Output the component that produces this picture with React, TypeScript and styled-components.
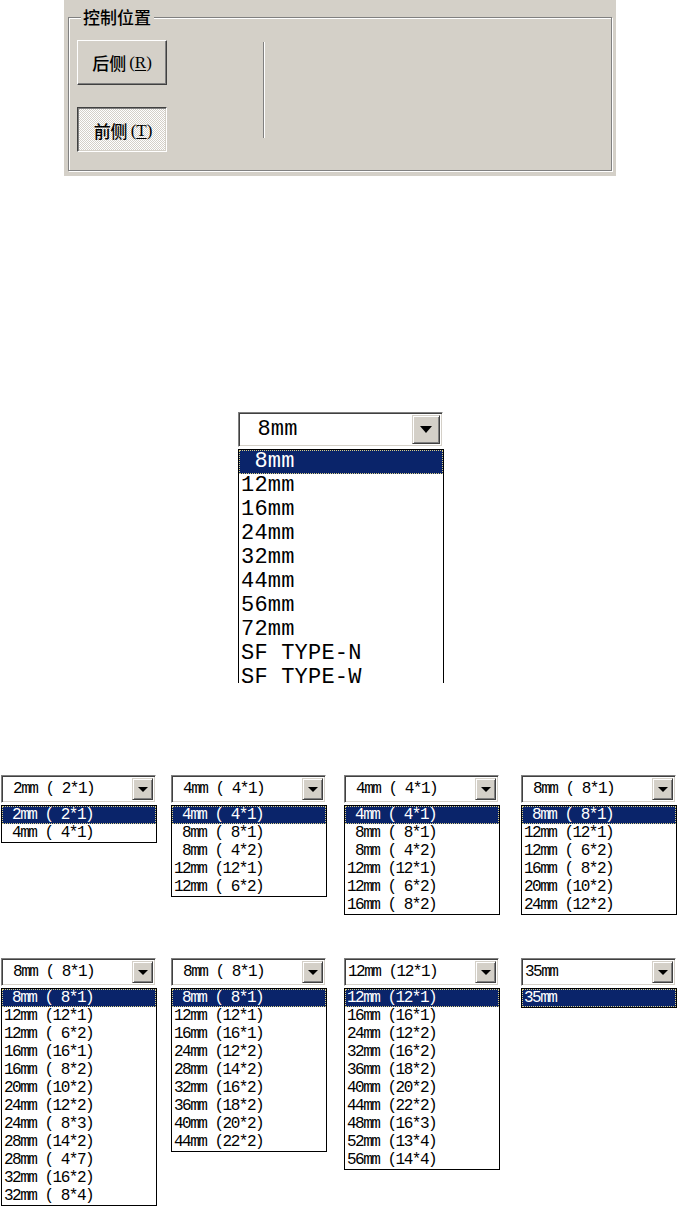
import React from 'react';
import styled, { createGlobalStyle, css } from 'styled-components';

const FACE = '#d4d0c8';
const SHADOW = '#808080';
const DARK = '#404040';
const NAVY = '#0a246a';

const GlobalStyle = createGlobalStyle`
    html, body {
        margin: 0;
        padding: 0;
        background: #fff;
    }
    body {
        font-family: "Liberation Sans", Arial, sans-serif;
    }
`;

const Page = styled.div`
    width: 680px;
    height: 1211px;
    overflow: hidden;
    display: flex;
    flex-direction: column;
`;

/* ---------- dialog panel ---------- */

const Panel = styled.div`
    margin-left: 64px;
    width: 552px;
    height: 176px;
    box-sizing: border-box;
    padding: 7px 4px 0 4px;
    background: ${FACE};
`;

const GroupBox = styled.fieldset`
    margin: 0;
    height: 164px;
    box-sizing: border-box;
    padding: 13px 8px 0 8px;
    border: 1px solid ${SHADOW};
    box-shadow: inset 1px 1px 0 #fff, 1px 1px 0 #fff;
    display: flex;
    align-items: flex-start;
`;

const Legend = styled.legend`
    margin-left: 4px;
    padding: 0 3px 0 2px;
    background: ${FACE};
    font-family: "Noto Sans CJK SC", sans-serif;
    font-size: 17px;
    font-weight: 500;
    line-height: 20px;
    color: #000;
`;

const ButtonColumn = styled.div`
    display: flex;
    flex-direction: column;
    gap: 22px;
`;

const PushButton = styled.div<{ $pressed?: boolean }>`
    width: 90px;
    height: 45px;
    box-sizing: border-box;
    display: flex;
    align-items: center;
    justify-content: center;
    font-family: "Noto Sans CJK SC", sans-serif;
    font-size: 17px;
    font-weight: 500;
    color: #000;
    border: 1px solid;
    ${(p) =>
        p.$pressed
            ? css`
                  border-color: ${DARK} #fff #fff ${DARK};
                  box-shadow: inset 1px 1px 0 ${SHADOW}, inset -1px -1px 0 ${FACE};
                  background-color: ${FACE};
                  background-image: repeating-conic-gradient(#fff 0 25%, ${FACE} 0 50%);
                  background-size: 2px 2px;
                  padding: 2px 0 0 2px;
              `
            : css`
                  border-color: #fff ${DARK} ${DARK} #fff;
                  box-shadow: inset -1px -1px 0 ${SHADOW};
                  background: ${FACE};
              `}
`;

const Mnemonic = styled.span`
    font-family: "Liberation Serif", serif;
    font-size: 17px;
    margin-left: 3px;

    u {
        text-underline-offset: 2px;
    }
`;

const Separator = styled.div`
    margin: 2px 0 0 96px;
    width: 1px;
    height: 96px;
    background: ${SHADOW};
    box-shadow: 1px 0 0 #fff;
`;

/* ---------- combo boxes ---------- */

type Size = 'big' | 'small';

const fontFor = (s: Size) =>
    s === 'big'
        ? css`
              font-size: 22px;
              letter-spacing: 0.2px;
          `
        : css`
              font-size: 16px;
              letter-spacing: -1.5px;
          `;

const ComboStack = styled.div<{ $left?: number }>`
    display: flex;
    flex-direction: column;
    align-items: flex-start;
    margin-left: ${(p) => p.$left ?? 0}px;
`;

const ComboField = styled.div<{ $w: number; $h: number }>`
    width: ${(p) => p.$w}px;
    height: ${(p) => p.$h}px;
    box-sizing: border-box;
    padding: 2px;
    display: flex;
    align-items: stretch;
    background: #fff;
    border: 1px solid;
    border-color: ${SHADOW} #fff #fff ${SHADOW};
    box-shadow: inset 1px 1px 0 ${DARK}, inset -1px -1px 0 ${FACE};
`;

const ComboText = styled.div<{ $size: Size }>`
    flex: 1;
    display: flex;
    align-items: center;
    padding-left: ${(p) => (p.$size === 'big' ? 3 : 1)}px;
    white-space: pre;
    font-family: "Liberation Mono", monospace;
    color: #000;
    ${(p) => fontFor(p.$size)}
`;

const DropButton = styled.div<{ $size: Size }>`
    width: ${(p) => (p.$size === 'big' ? 28 : 21)}px;
    box-sizing: border-box;
    display: flex;
    align-items: center;
    justify-content: center;
    background: ${FACE};
    border: 1px solid;
    border-color: ${FACE} ${DARK} ${DARK} ${FACE};
    box-shadow: inset 1px 1px 0 #fff, inset -1px -1px 0 ${SHADOW};

    &::after {
        content: '';
        width: 0;
        height: 0;
        border-style: solid;
        border-color: #000 transparent transparent transparent;
        border-width: ${(p) => (p.$size === 'big' ? '7px 6px 0 6px' : '5px 5px 0 5px')};
    }
`;

const ListBox = styled.div<{ $w: number; $clip?: number }>`
    width: ${(p) => p.$w}px;
    box-sizing: border-box;
    margin-top: 2px;
    background: #fff;
    border: 1px solid #000;
    ${(p) =>
        p.$clip &&
        css`
            height: ${p.$clip}px;
            overflow: hidden;
            border-bottom: none;
        `}
`;

const ListItem = styled.div<{ $size: Size; $selected?: boolean }>`
    height: ${(p) => (p.$size === 'big' ? 24 : 18)}px;
    line-height: ${(p) => (p.$size === 'big' ? 24 : 18)}px;
    padding-left: ${(p) => (p.$size === 'big' ? 2 : 2)}px;
    white-space: pre;
    font-family: "Liberation Mono", monospace;
    color: #000;
    ${(p) => fontFor(p.$size)}
    ${(p) =>
        p.$selected &&
        css`
            background: ${NAVY};
            color: #fff;
            outline: 1px dotted #d9cf86;
            outline-offset: -1px;
        `}
`;

interface DropdownProps {
    size: Size;
    width: number;
    value: string;
    items: string[];
    left?: number;
    clip?: number;
}

const Dropdown = ({ size, width, value, items, left, clip }: DropdownProps) => (
    <ComboStack $left={left}>
        <ComboField $w={width} $h={size === 'big' ? 35 : 28}>
            <ComboText $size={size}>{value}</ComboText>
            <DropButton $size={size} />
        </ComboField>
        <ListBox $w={width + 1} $clip={clip}>
            {items.map((item, i) => (
                <ListItem key={i} $size={size} $selected={i === 0}>
                    {item}
                </ListItem>
            ))}
        </ListBox>
    </ComboStack>
);

const BigArea = styled.div`
    margin-top: 236px;
`;

const ComboGrid = styled.div`
    margin-top: 92px;
    display: grid;
    grid-template-columns: 170px 173px 177px 160px;
    grid-template-rows: 183px auto;
    align-items: start;
`;

const TAPE_SIZES = [' 8mm', '12mm', '16mm', '24mm', '32mm', '44mm', '56mm', '72mm', 'SF TYPE-N', 'SF TYPE-W'];

const smallCombos: { value: string; items: string[] }[] = [
    { value: ' 2mm ( 2*1)', items: [' 2mm ( 2*1)', ' 4mm ( 4*1)'] },
    {
        value: ' 4mm ( 4*1)',
        items: [' 4mm ( 4*1)', ' 8mm ( 8*1)', ' 8mm ( 4*2)', '12mm (12*1)', '12mm ( 6*2)'],
    },
    {
        value: ' 4mm ( 4*1)',
        items: [' 4mm ( 4*1)', ' 8mm ( 8*1)', ' 8mm ( 4*2)', '12mm (12*1)', '12mm ( 6*2)', '16mm ( 8*2)'],
    },
    {
        value: ' 8mm ( 8*1)',
        items: [' 8mm ( 8*1)', '12mm (12*1)', '12mm ( 6*2)', '16mm ( 8*2)', '20mm (10*2)', '24mm (12*2)'],
    },
    {
        value: ' 8mm ( 8*1)',
        items: [
            ' 8mm ( 8*1)',
            '12mm (12*1)',
            '12mm ( 6*2)',
            '16mm (16*1)',
            '16mm ( 8*2)',
            '20mm (10*2)',
            '24mm (12*2)',
            '24mm ( 8*3)',
            '28mm (14*2)',
            '28mm ( 4*7)',
            '32mm (16*2)',
            '32mm ( 8*4)',
        ],
    },
    {
        value: ' 8mm ( 8*1)',
        items: [
            ' 8mm ( 8*1)',
            '12mm (12*1)',
            '16mm (16*1)',
            '24mm (12*2)',
            '28mm (14*2)',
            '32mm (16*2)',
            '36mm (18*2)',
            '40mm (20*2)',
            '44mm (22*2)',
        ],
    },
    {
        value: '12mm (12*1)',
        items: [
            '12mm (12*1)',
            '16mm (16*1)',
            '24mm (12*2)',
            '32mm (16*2)',
            '36mm (18*2)',
            '40mm (20*2)',
            '44mm (22*2)',
            '48mm (16*3)',
            '52mm (13*4)',
            '56mm (14*4)',
        ],
    },
    { value: '35mm', items: ['35mm'] },
];

export default function App() {
    return (
        <Page>
            <GlobalStyle />
            <Panel>
                <GroupBox>
                    <Legend>控制位置</Legend>
                    <ButtonColumn>
                        <PushButton>
                            后侧
                            <Mnemonic>
                                (<u>R</u>)
                            </Mnemonic>
                        </PushButton>
                        <PushButton $pressed>
                            前侧
                            <Mnemonic>
                                (<u>T</u>)
                            </Mnemonic>
                        </PushButton>
                    </ButtonColumn>
                    <Separator />
                </GroupBox>
            </Panel>

            <BigArea>
                <Dropdown size="big" width={205} left={238} value=" 8mm" items={TAPE_SIZES} clip={234} />
            </BigArea>

            <ComboGrid>
                {smallCombos.map((c, i) => (
                    <Dropdown key={i} size="small" width={155} left={1} value={c.value} items={c.items} />
                ))}
            </ComboGrid>
        </Page>
    );
}
